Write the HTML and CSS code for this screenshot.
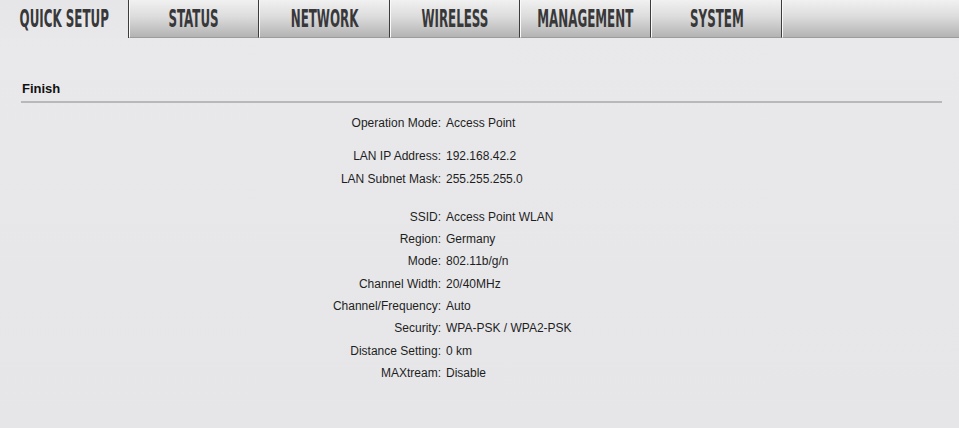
FILE: index.html
```html
<!DOCTYPE html>
<html>
<head>
<meta charset="utf-8">
<link rel="stylesheet" href="styles.css">
</head>
<body>
<nav class="tabs">
  <div class="tab active"><span class="label">QUICK SETUP</span></div>
  <div class="tab"><span class="label">STATUS</span></div>
  <div class="tab"><span class="label">NETWORK</span></div>
  <div class="tab"><span class="label">WIRELESS</span></div>
  <div class="tab"><span class="label">MANAGEMENT</span></div>
  <div class="tab"><span class="label">SYSTEM</span></div>
  <div class="filler"></div>
</nav>
<main class="content">
  <h2 class="section-title">Finish</h2>
  <div class="group">
    <div class="row"><span class="key">Operation Mode:</span><span class="val">Access Point</span></div>
  </div>
  <div class="group">
    <div class="row"><span class="key">LAN IP Address:</span><span class="val">192.168.42.2</span></div>
    <div class="row"><span class="key">LAN Subnet Mask:</span><span class="val">255.255.255.0</span></div>
  </div>
  <div class="group wide">
    <div class="row"><span class="key">SSID:</span><span class="val">Access Point WLAN</span></div>
    <div class="row"><span class="key">Region:</span><span class="val">Germany</span></div>
    <div class="row"><span class="key">Mode:</span><span class="val">802.11b/g/n</span></div>
    <div class="row"><span class="key">Channel Width:</span><span class="val">20/40MHz</span></div>
    <div class="row"><span class="key">Channel/Frequency:</span><span class="val">Auto</span></div>
    <div class="row"><span class="key">Security:</span><span class="val">WPA-PSK / WPA2-PSK</span></div>
    <div class="row"><span class="key">Distance Setting:</span><span class="val">0 km</span></div>
    <div class="row"><span class="key">MAXtream:</span><span class="val">Disable</span></div>
  </div>
</main>
</body>
</html>
```
FILE: styles.css
```css
html, body {
  margin: 0;
  padding: 0;
}
body {
  width: 959px;
  height: 428px;
  overflow: hidden;
  background: linear-gradient(to bottom, #e9e9eb 0%, #e6e6e9 100%);
  font-family: "Liberation Sans", Arial, sans-serif;
  color: #1a1a1a;
}
.tabs {
  display: flex;
  height: 38px;
}
.tab {
  width: 129px;
  height: 38px;
  box-sizing: border-box;
  display: flex;
  align-items: center;
  justify-content: center;
  background: linear-gradient(to bottom, #f1f1f1 0%, #dcdcdc 45%, #b3b3b3 100%);
  border-left: 1px solid #fafafa;
  border-right: 1px solid #3c3c3c;
  border-bottom: 1px solid #9c9c9c;
  overflow: hidden;
}
.tab.active {
  width: 129px;
  background: linear-gradient(to bottom, #e6e6e8 0%, #e8e8ea 100%);
  border-left: none;
  border-bottom: none;
}
.tab:nth-child(2) { width: 130px; }
.tab:nth-child(3) { width: 131px; }
.tab:nth-child(4) { width: 130px; }
.tab:nth-child(5) { width: 131px; }
.tab:nth-child(6) { width: 131px; }
.filler {
  flex: 1;
  height: 38px;
  box-sizing: border-box;
  background: linear-gradient(to bottom, #f1f1f1 0%, #dcdcdc 45%, #b3b3b3 100%);
  border-left: 1px solid #fafafa;
  border-bottom: 1px solid #9c9c9c;
}
.label {
  display: inline-block;
  font-family: "DejaVu Sans Condensed", "DejaVu Sans", sans-serif;
  font-stretch: condensed;
  font-weight: bold;
  font-size: 24px;
  color: #38383a;
  transform: scaleX(0.55);
  white-space: nowrap;
  letter-spacing: 0;
}
.content {
  padding: 0 17px 0 21px;
}
.section-title {
  margin: 43px 0 0 0;
  padding: 0 0 5px 1px;
  font-size: 13px;
  font-weight: bold;
  line-height: 15px;
  color: #111;
  border-bottom: 2px solid #b8b8ba;
}
.group {
  margin-top: 9px;
}
.group + .group {
  margin-top: 11px;
}
.group.wide {
  margin-top: 16px;
}
.row {
  display: grid;
  grid-template-columns: 420px 1fr;
  column-gap: 5px;
  font-size: 12px;
  line-height: 22.3px;
  color: #1e1e1e;
}
.key {
  text-align: right;
}
.val {
  text-align: left;
}
```
